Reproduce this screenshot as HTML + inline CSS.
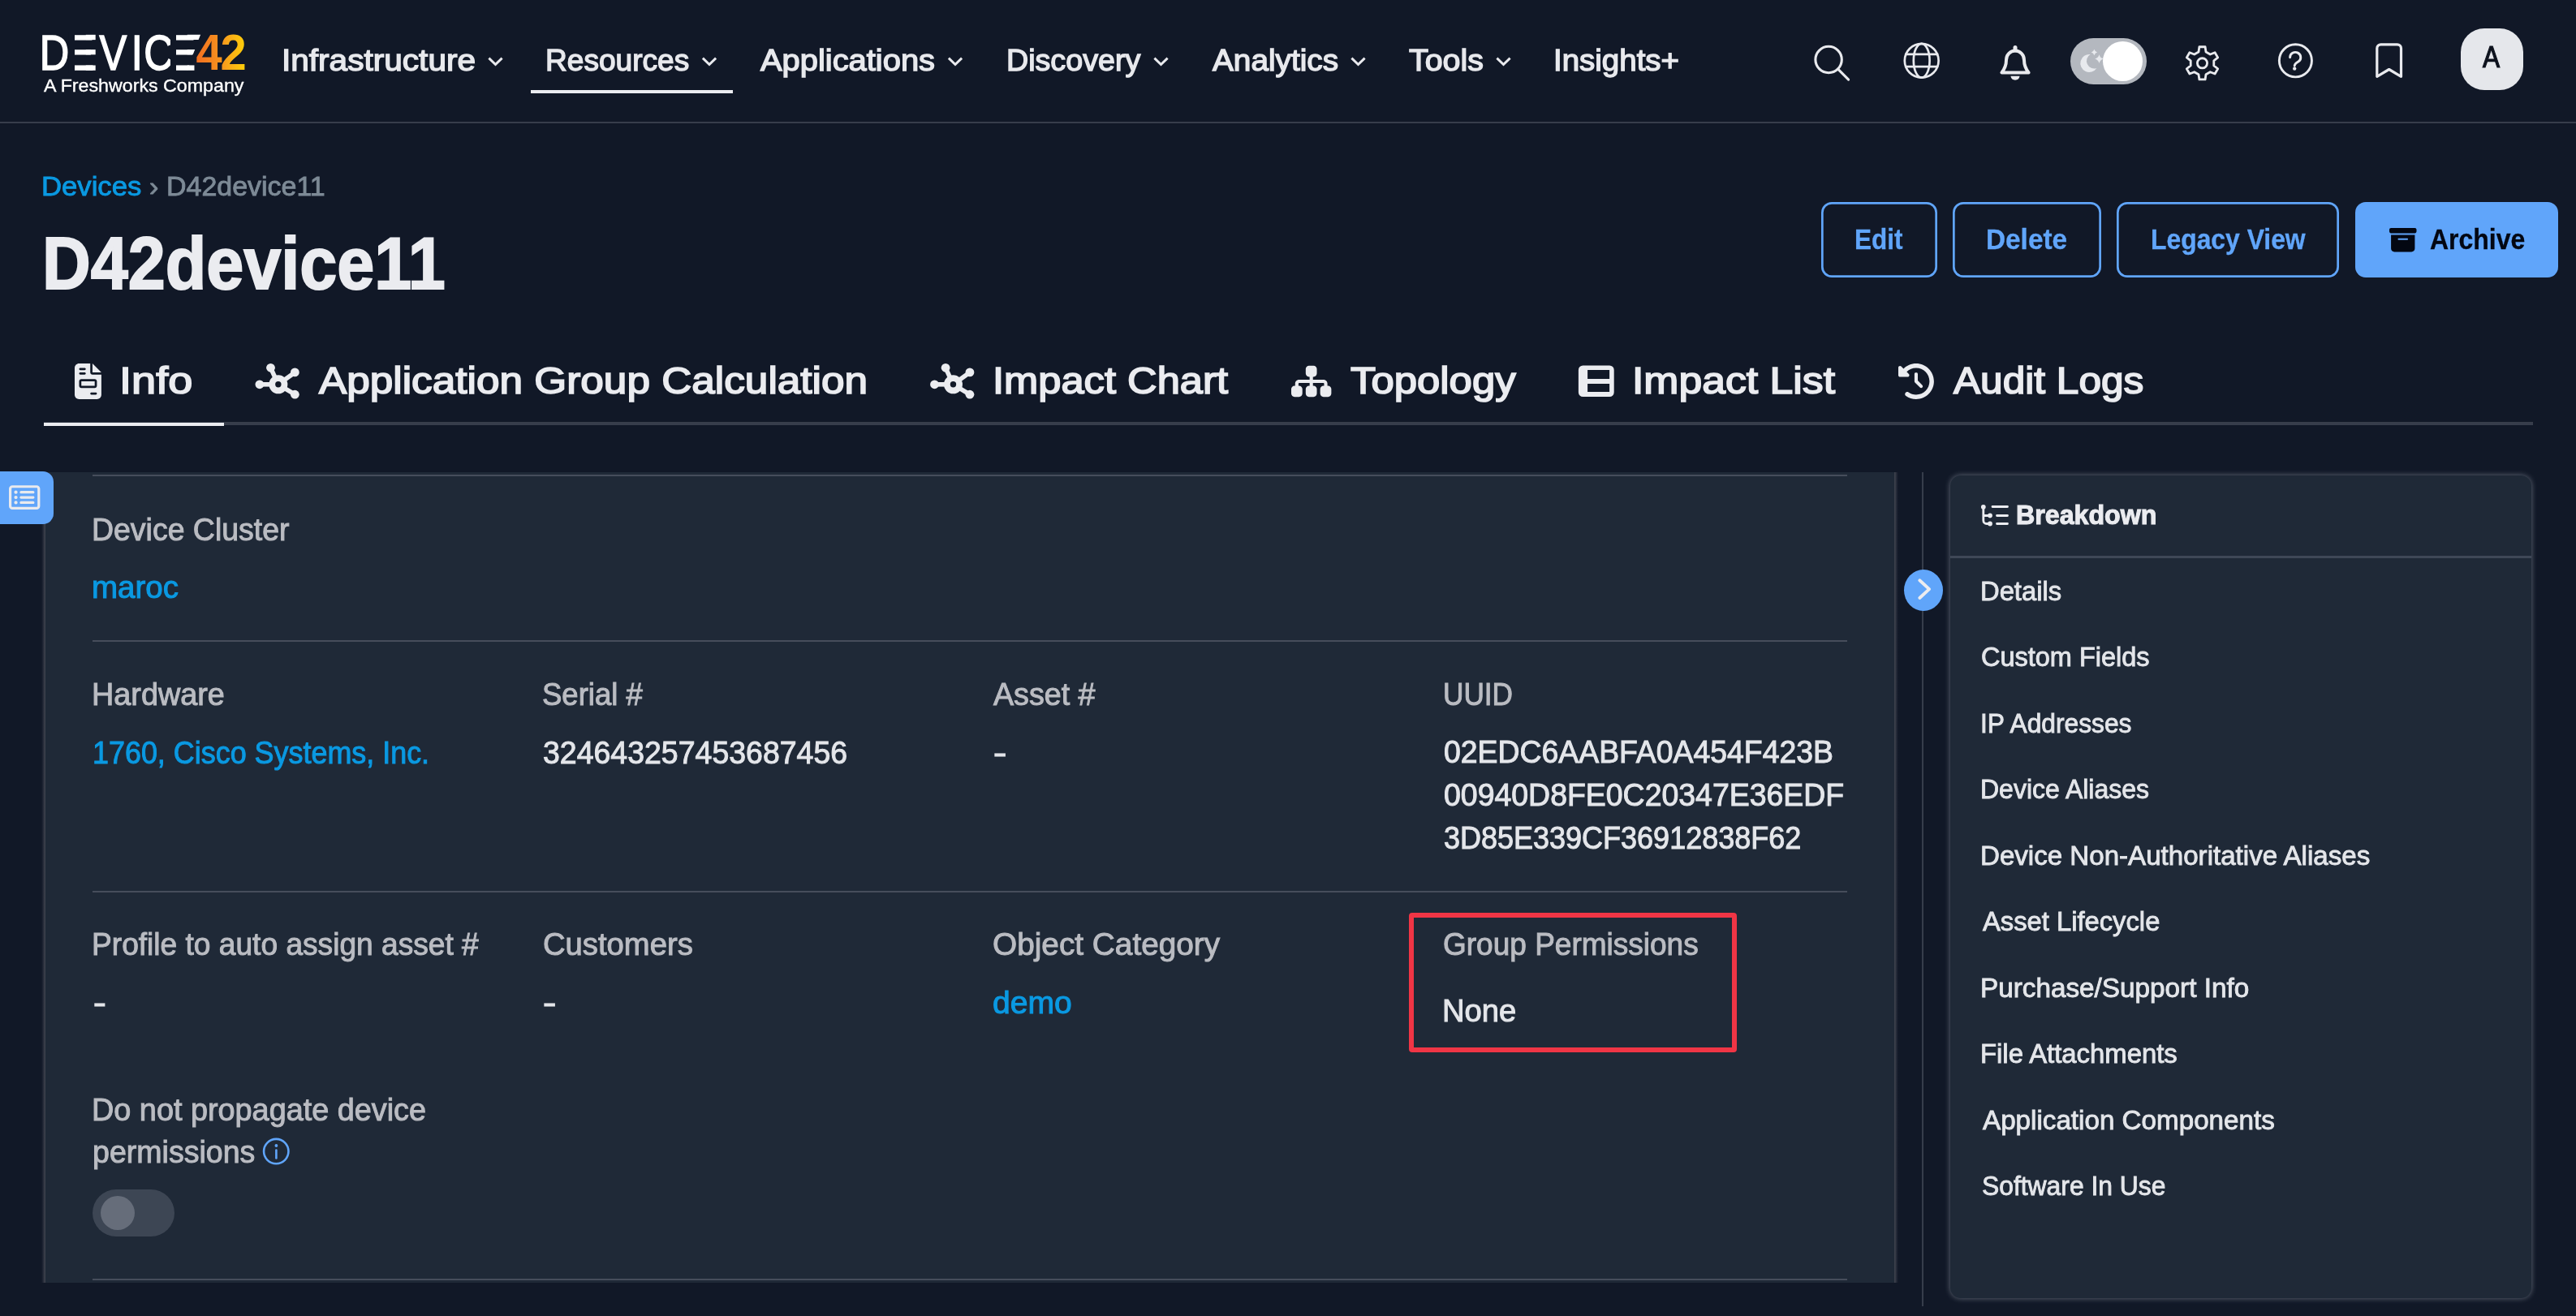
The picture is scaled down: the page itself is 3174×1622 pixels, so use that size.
<!DOCTYPE html>
<html lang="en">
<head>
<meta charset="utf-8">
<title>D42device11 | Device42</title>
<style>
*{box-sizing:border-box;margin:0;padding:0}
html,body{width:3174px;height:1622px;overflow:hidden;background:#111827}
body{position:relative;font-family:"Liberation Sans",sans-serif;color:#e8e9ed}
a{color:inherit;text-decoration:none}
button{font:inherit;color:inherit;background:none;border:0;display:block}
h1,h2{font-size:inherit;font-weight:inherit}
ul{list-style:none}
.layer{position:absolute;left:0;top:0;width:3174px;height:1622px;will-change:transform}
.a{position:absolute}
.t{position:absolute;white-space:nowrap;line-height:1;transform-origin:0 0;display:block}
svg{position:absolute;overflow:visible}
.nv{font-size:37.47px;color:#e8e9ed;font-weight:400;-webkit-text-stroke:1.4px #e8e9ed}
.tg{font-size:22.49px;color:#ffffff;font-weight:400;-webkit-text-stroke:0.35px #ffffff}
.av{font-size:36.66px;color:#0d121d;font-weight:400;-webkit-text-stroke:1.2px #0d121d}
.cl{font-size:33.3px;color:#0a99e2;font-weight:400;-webkit-text-stroke:0.9px #0a99e2}
.cr{font-size:33.3px;color:#7d8a96;font-weight:400;-webkit-text-stroke:0.9px #7d8a96}
.h1{font-size:91.0px;color:#ebecf0;font-weight:700;-webkit-text-stroke:2.0px #ebecf0}
.bt{font-size:34.16px;color:#60a5fa;font-weight:700;-webkit-text-stroke:0.3px #60a5fa}
.bd{font-size:34.16px;color:#030712;font-weight:700;-webkit-text-stroke:0.3px #030712}
.tb{font-size:46.94px;color:#ebecf0;font-weight:400;-webkit-text-stroke:1.7px #ebecf0}
.lb{font-size:38.05px;color:#babcc2;font-weight:400;-webkit-text-stroke:1.0px #babcc2}
.lk{font-size:38.05px;color:#0a99e2;font-weight:400;-webkit-text-stroke:1.0px #0a99e2}
.vl{font-size:38.05px;color:#e4e6ea;font-weight:400;-webkit-text-stroke:1.0px #e4e6ea}
.ds{font-size:37.76px;color:#e4e6ea;font-weight:400;-webkit-text-stroke:1.2px #e4e6ea}
.bh{font-size:33.91px;color:#ebecf0;font-weight:700;-webkit-text-stroke:1.1px #ebecf0}
.bi{font-size:33.3px;color:#e4e6ea;font-weight:400;-webkit-text-stroke:0.9px #e4e6ea}
.navline{left:0;top:149.8px;width:3174px;height:2.5px;background:#373d4b}
.resline{left:654px;top:111px;width:249px;height:4px;background:#ebecf0}
.pill{left:2551px;top:47px;width:94px;height:57px;border-radius:28.5px;background:#b4b8bf}
.pknob{left:2591px;top:50.5px;width:49px;height:49px;border-radius:50%;background:#fff}
.avatar{left:3032px;top:35px;width:77px;height:76px;border-radius:29px;background:#e5e7eb}
.btn{top:248.8px;height:93.2px;box-shadow:inset 0 0 0 2.7px #60a5fa;border-radius:13px}
.btn.fill{background:#60a5fa;box-shadow:none}
.tabline{left:54px;top:520px;width:3067px;height:4.1px;background:#373d4b}
.tabact{left:53.8px;top:520.7px;width:222.4px;height:4.4px;background:#ecedf1}
.card{left:56.3px;top:581.7px;width:2277.7px;height:999.3px;background:#1f2937}
.cardl{left:51.1px;top:581.7px;width:5.2px;height:999.3px;background:linear-gradient(to left,#3c404c 0,#3c404c 16%,#2b303d 45%,#1c2231 72%,#111827 100%)}
.cardr{left:2334px;top:581.7px;width:5.4px;height:999.3px;background:linear-gradient(to right,#3c404c 0,#3c404c 16%,#2b303d 45%,#1c2231 72%,#111827 100%)}
.sep{left:114px;width:2162px;height:2.3px;background:#464d5b}
.sidetab{left:0;top:581px;width:66px;height:65px;background:#60a5fa;border-radius:0 13px 13px 0}
.red{left:1735.5px;top:1125px;width:404px;height:172px;border:6px solid #f03545;border-radius:4px}
.tog{left:114px;top:1466px;width:101px;height:58px;border-radius:29px;background:#3d4654}
.knob{left:124px;top:1474px;width:42px;height:42px;border-radius:50%;background:#666d7a}
.vdiv{left:2368px;top:582px;width:2.1px;height:1028px;background:#363d4b}
.circ{left:2345.8px;top:701.7px;width:48.4px;height:51.6px;border-radius:50%;background:#60a5fa}
.panel{left:2403.3px;top:586.3px;width:715.4px;height:1013.7px;background:#1f2937;border-radius:13px;box-shadow:0 0 7px 0 rgba(205,210,222,.45)}
.psep{left:2403.3px;top:685.4px;width:715.4px;height:2.2px;background:#3f4857}
</style>
</head>
<body>
<header class="layer">
<a class="brand" href="#" aria-label="Device42"><svg style="left:0;top:0" width="340" height="130"><defs><linearGradient id="og" gradientUnits="userSpaceOnUse" x1="260.2" y1="0" x2="325.8" y2="0"><stop offset="0" stop-color="#f26f21"/><stop offset="0.5" stop-color="#f7931e"/><stop offset="0.62" stop-color="#f9a51a"/><stop offset="1" stop-color="#ffd008"/></linearGradient></defs><text transform="scale(0.82,1)" x="59.58 100.30 149.49 197.12 216.26 252.74" y="86.0" font-family="Liberation Sans, sans-serif" font-size="61.6" fill="#fff" stroke="#fff" stroke-width="1.6">DEVICE</text><rect x="84.99" y="40" width="7.01" height="50" fill="#111827"/><rect x="209.99" y="40" width="7.01" height="50" fill="#111827"/><rect x="105.77" y="42.82" width="11.93" height="6.29" fill="#fff"/><rect x="105.77" y="61.11" width="11.93" height="6.23" fill="#fff"/><rect x="105.77" y="80.51" width="11.93" height="6.29" fill="#fff"/><path d="M230.77,42.82 H247.10 L244.58,49.11 H230.77 Z" fill="#fff"/><path d="M230.77,61.11 H240.20 L237.71,67.34 H230.77 Z" fill="#fff"/><path d="M230.77,80.51 H233.40 L230.88,86.80 H230.77 Z" fill="#fff"/><text transform="scale(0.93,1)" x="259.78" y="86.0" font-family="Liberation Sans, sans-serif" font-weight="700" font-size="62.2" fill="url(#og)" letter-spacing="-2.5">42</text></svg><span class="t tg" style="left:54.14px;top:95.48px;transform:scaleX(1.0326)">A Freshworks Company</span></a>
<nav aria-label="Main"><a class="t nv" href="#" style="left:346.51px;top:55.57px;transform:scaleX(1.0829)">Infrastructure</a><a class="t nv" href="#" style="left:672.15px;top:55.57px;transform:scaleX(0.9897)">Resources</a><a class="t nv" href="#" style="left:936.67px;top:55.57px;transform:scaleX(1.0643)">Applications</a><a class="t nv" href="#" style="left:1239.62px;top:55.57px;transform:scaleX(1.0047)">Discovery</a><a class="t nv" href="#" style="left:1493.65px;top:55.57px;transform:scaleX(1.0340)">Analytics</a><a class="t nv" href="#" style="left:1735.85px;top:55.57px;transform:scaleX(1.0499)">Tools</a><a class="t nv" href="#" style="left:1914.17px;top:55.57px;transform:scaleX(1.0265)">Insights+</a><div class="a resline"></div></nav>
<div class="tools"><svg style="left:0;top:0" width="3174" height="150"><path d="M602.4,71.7 L610.5,79.5 L618.6,71.7" fill="none" stroke="#e9eaee" stroke-width="3" stroke-linecap="butt" stroke-linejoin="miter"/><path d="M865.9,71.7 L874.0,79.5 L882.1,71.7" fill="none" stroke="#e9eaee" stroke-width="3" stroke-linecap="butt" stroke-linejoin="miter"/><path d="M1168.9,71.7 L1177.0,79.5 L1185.1,71.7" fill="none" stroke="#e9eaee" stroke-width="3" stroke-linecap="butt" stroke-linejoin="miter"/><path d="M1422.4,71.7 L1430.5,79.5 L1438.6,71.7" fill="none" stroke="#e9eaee" stroke-width="3" stroke-linecap="butt" stroke-linejoin="miter"/><path d="M1665.4,71.7 L1673.5,79.5 L1681.6,71.7" fill="none" stroke="#e9eaee" stroke-width="3" stroke-linecap="butt" stroke-linejoin="miter"/><path d="M1844.4,71.7 L1852.5,79.5 L1860.6,71.7" fill="none" stroke="#e9eaee" stroke-width="3" stroke-linecap="butt" stroke-linejoin="miter"/><circle cx="2253.1" cy="73.5" r="16.2" fill="none" stroke="#e9eaee" stroke-linecap="round" stroke-linejoin="round" stroke-width="3.1"/><path d="M2264.9,85.4 L2277.6,98.2" fill="none" stroke="#e9eaee" stroke-linecap="round" stroke-linejoin="round" stroke-width="3.1"/><g fill="none" stroke="#e9eaee" stroke-linecap="round" stroke-linejoin="round" stroke-width="2.7"><circle cx="2367.7" cy="74.7" r="20.9"/><ellipse cx="2367.7" cy="74.7" rx="9.9" ry="20.9"/><path d="M2348.3,66.9 H2387.1 M2348.3,82.2 H2387.1"/></g><g transform="translate(2463,55)"><path d="M3.4,34.4 H36.6 C32.2,29 31,24.5 31,19 A11,11.4 0 0 0 9,19 C9,24.500 7.800,29 3.400,34.400 Z" fill="none" stroke="#e9eaee" stroke-linecap="round" stroke-linejoin="round" stroke-width="4"/><path d="M20,3.400 V7" fill="none" stroke="#e9eaee" stroke-linecap="round" stroke-linejoin="round" stroke-width="5"/><path d="M14.400,38.800 H25.600 A5.700,6 0 0 1 14.400,38.800 Z" fill="#e9eaee"/></g><path d="M2708.99,63.96 L2709.89,57.77 L2717.11,57.77 L2718.01,63.96 L2723.27,67.00 L2729.08,64.68 L2732.69,70.94 L2727.78,74.81 L2727.78,80.89 L2732.69,84.76 L2729.08,91.02 L2723.27,88.70 L2718.01,91.74 L2717.11,97.93 L2709.89,97.93 L2708.99,91.74 L2703.73,88.70 L2697.92,91.02 L2694.31,84.76 L2699.22,80.89 L2699.22,74.81 L2694.31,70.94 L2697.92,64.68 L2703.73,67.00 Z" fill="none" stroke="#e9eaee" stroke-linecap="round" stroke-linejoin="round" stroke-width="2.8"/><circle cx="2713.5" cy="77.85" r="6.1" fill="none" stroke="#e9eaee" stroke-linecap="round" stroke-linejoin="round" stroke-width="2.8"/><circle cx="2828.4" cy="74.8" r="20.05" fill="none" stroke="#e9eaee" stroke-linecap="round" stroke-linejoin="round" stroke-width="2.9"/><path d="M2821.6,70.800 A6.600,6.300 0 1 1 2831.800,76 C2829,77.800 2827.200,78.800 2827.200,81.300" fill="none" stroke="#e9eaee" stroke-linecap="round" stroke-linejoin="round" stroke-width="2.9"/><circle cx="2827.2" cy="84.6" r="2.2" fill="#e9eaee"/><path d="M2928.8,94.3 V59.500 a4.700,4.700 0 0 1 4.700,-4.700 H2953.800 a4.700,4.700 0 0 1 4.700,4.700 V94.300 L2943.650,85.500 Z" fill="none" stroke="#e9eaee" stroke-linecap="round" stroke-linejoin="round" stroke-width="3.200" stroke-linejoin="miter"/></svg><div class="a pill" role="switch" aria-label="Theme"></div><svg style="left:0;top:0" width="3174" height="150"><path d="M2575.60,66.98 A11.0,11.0 0 1 0 2583.46,83.99 A9.42,9.42 0 0 1 2575.60,66.98 Z" fill="#e8eaee"/><path d="M2580.4,60.8 Q2581.214,63.686 2584.1,64.5 Q2581.214,65.314 2580.4,68.2 Q2579.5860000000002,65.314 2576.7000000000003,64.5 Q2579.5860000000002,63.686 2580.4,60.8 Z M2586.5,67.3 Q2587.666,71.434 2591.8,72.6 Q2587.666,73.76599999999999 2586.5,77.89999999999999 Q2585.334,73.76599999999999 2581.2,72.6 Q2585.334,71.434 2586.5,67.3 Z" fill="#e8eaee"/></svg><div class="a pknob"></div>
<div class="a avatar"><span class="t av" style="left:27.46px;top:18.36px;transform:scaleX(0.8625)">A</span></div></div>
<div class="a navline"></div>
</header>
<main class="layer">
<nav aria-label="Breadcrumb"><a class="t cl" href="#" style="left:50.93px;top:213.05px;transform:scaleX(1.0408)">Devices</a><span class="t cr" style="left:184.28px;top:213.05px;transform:scaleX(1.0208)">›</span><span class="t cr" style="left:204.77px;top:213.05px;transform:scaleX(1.0200)">D42device11</span></nav>
<h1 class="t h1" style="left:52.07px;top:279.25px;transform:scaleX(0.9092)">D42device11</h1>
<div class="actions">
<button type="button" class="a btn" style="left:2244px;width:143px"><span class="t bt" style="left:41.03px;top:29.13px;transform:scaleX(0.9218)">Edit</span></button>
<button type="button" class="a btn" style="left:2406px;width:183px"><span class="t bt" style="left:41.42px;top:29.13px;transform:scaleX(0.9762)">Delete</span></button>
<button type="button" class="a btn" style="left:2608px;width:274px"><span class="t bt" style="left:41.76px;top:29.13px;transform:scaleX(0.9326)">Legacy View</span></button>
<button type="button" class="a btn fill" style="left:2902px;width:250px"><span class="t bd" style="left:91.74px;top:28.73px;transform:scaleX(0.9354)">Archive</span></button>
</div>
<div class="tabs" role="tablist"><div class="a tabline"></div><div class="a tabact"></div><svg style="left:92.1px;top:447.9px" width="32.92" height="43.90" viewBox="0 0 384 512"><path fill="#ebecf0" d="M64 0C28.7 0 0 28.7 0 64V448c0 35.300 28.700 64 64 64H320c35.300 0 64-28.700 64-64V160H256c-17.700 0-32-14.300-32-32V0H64zM256 0V128H384L256 0zM80 64h64c8.800 0 16 7.200 16 16s-7.200 16-16 16H80c-8.800 0-16-7.200-16-16s7.200-16 16-16zm0 64h64c8.800 0 16 7.200 16 16s-7.200 16-16 16H80c-8.800 0-16-7.200-16-16s7.200-16 16-16zm16 96H288c17.700 0 32 14.300 32 32v64c0 17.700-14.300 32-32 32H96c-17.700 0-32-14.300-32-32V256c0-17.700 14.300-32 32-32zm0 32v64H288V256H96zM240 416h64c8.800 0 16 7.200 16 16s-7.200 16-16 16H240c-8.800 0-16-7.200-16-16s7.200-16 16-16z"/></svg><svg style="left:0;top:0" width="3174" height="560"><g stroke="#ebecf0" stroke-width="5.6" fill="#ebecf0"><path d="M342.86,473.8 L319.90,473.8"/><path d="M342.86,473.8 L333.50,453.3"/><path d="M342.86,473.8 L363.35,458.9"/><path d="M342.86,473.8 L363.35,486.2"/></g><circle cx="319.90" cy="473.8" r="5.400" fill="#ebecf0"/><circle cx="333.50" cy="453.3" r="5.400" fill="#ebecf0"/><circle cx="363.35" cy="458.9" r="5.400" fill="#ebecf0"/><circle cx="363.35" cy="486.2" r="5.400" fill="#ebecf0"/><circle cx="342.86" cy="473.8" r="11.500" fill="#ebecf0"/><circle cx="342.86" cy="473.8" r="3.700" fill="#111827"/><g stroke="#ebecf0" stroke-width="5.6" fill="#ebecf0"><path d="M1174.46,473.8 L1151.50,473.8"/><path d="M1174.46,473.8 L1165.10,453.3"/><path d="M1174.46,473.8 L1194.95,458.9"/><path d="M1174.46,473.8 L1194.95,486.2"/></g><circle cx="1151.50" cy="473.8" r="5.400" fill="#ebecf0"/><circle cx="1165.10" cy="453.3" r="5.400" fill="#ebecf0"/><circle cx="1194.95" cy="458.9" r="5.400" fill="#ebecf0"/><circle cx="1194.95" cy="486.2" r="5.400" fill="#ebecf0"/><circle cx="1174.46" cy="473.8" r="11.500" fill="#ebecf0"/><circle cx="1174.46" cy="473.8" r="3.700" fill="#111827"/><path fill-rule="evenodd" fill="#ebecf0" d="M1950.400,450.500 H1983.200 a5.500,5.500 0 0 1 5.500,5.500 V483.500 a5.500,5.500 0 0 1 -5.500,5.500 H1950.400 a5.500,5.500 0 0 1 -5.500,-5.500 V456 a5.500,5.500 0 0 1 5.500,-5.500 Z M1956.100,456.100 V467 H1983.100 V456.100 Z M1956.100,472.900 V483.100 H1983.100 V472.900 Z"/></svg><svg style="left:1590.9px;top:447.95px" width="49.39" height="43.90" viewBox="0 0 576 512"><path fill="#ebecf0" d="M208 80c0-26.500 21.500-48 48-48h64c26.500 0 48 21.500 48 48v64c0 26.500-21.500 48-48 48h-8v40H464c30.900 0 56 25.100 56 56v32h8c26.500 0 48 21.500 48 48v64c0 26.500-21.500 48-48 48H464c-26.500 0-48-21.500-48-48V368c0-26.500 21.500-48 48-48h8V288c0-4.400-3.600-8-8-8H312v40h8c26.500 0 48 21.500 48 48v64c0 26.500-21.500 48-48 48H256c-26.500 0-48-21.500-48-48V368c0-26.500 21.500-48 48-48h8V280H112c-4.400 0-8 3.600-8 8v32h8c26.500 0 48 21.500 48 48v64c0 26.500-21.500 48-48 48H48c-26.500 0-48-21.500-48-48V368c0-26.500 21.500-48 48-48h8V288c0-30.900 25.100-56 56-56H264V192h-8c-26.500 0-48-21.500-48-48V80z"/></svg><svg style="left:2338.75px;top:447.7px" width="43.90" height="43.90" viewBox="0 0 512 512"><path fill="#ebecf0" d="M75 75L41 41C25.900 25.900 0 36.600 0 57.900V168c0 13.300 10.700 24 24 24H134.100c21.400 0 32.100-25.900 17-41l-30.800-30.800C155 85.500 203 64 256 64c106 0 192 86 192 192s-86 192-192 192c-40.800 0-78.600-12.700-109.700-34.400c-14.500-10.100-34.400-6.600-44.600 7.900s-6.600 34.400 7.900 44.600C151.200 495 201.700 512 256 512c141.400 0 256-114.600 256-256S397.400 0 256 0C185.300 0 121.300 28.700 75 75zm181 53c-13.300 0-24 10.700-24 24V256c0 6.400 2.500 12.500 7 17l72 72c9.400 9.400 24.600 9.400 33.900 0s9.400-24.600 0-33.900l-65-65V152c0-13.300-10.700-24-24-24z"/></svg><a class="t tb" href="#" role="tab" style="left:147.23px;top:445.66px;transform:scaleX(1.1535)">Info</a><a class="t tb" href="#" role="tab" style="left:393.33px;top:445.66px;transform:scaleX(1.0933)">Application Group Calculation</a><a class="t tb" href="#" role="tab" style="left:1223.24px;top:445.66px;transform:scaleX(1.0792)">Impact Chart</a><a class="t tb" href="#" role="tab" style="left:1663.53px;top:445.66px;transform:scaleX(1.0839)">Topology</a><a class="t tb" href="#" role="tab" style="left:2011.16px;top:445.66px;transform:scaleX(1.1017)">Impact List</a><a class="t tb" href="#" role="tab" style="left:2407.05px;top:445.66px;transform:scaleX(1.0565)">Audit Logs</a></div>
<section class="details" aria-label="Details">
<div class="a card"></div><div class="a cardl"></div><div class="a cardr"></div>
<div class="a sep" style="top:584.9px"></div>
<div class="a sep" style="top:789px"></div>
<div class="a sep" style="top:1098px"></div>
<div class="a sep" style="top:1576px"></div>
<div class="a red"></div>
<dl>
<div><dt><span class="t lb" style="left:112.92px;top:633.53px;transform:scaleX(0.9842)">Device Cluster</span></dt><dd><a class="t lk" href="#" style="left:113.45px;top:704.78px;transform:scaleX(1.0128)">maroc</a></dd></div>
<div><dt><span class="t lb" style="left:112.90px;top:836.53px;transform:scaleX(0.9931)">Hardware</span></dt><dd><a class="t lk" href="#" style="left:113.99px;top:908.53px;transform:scaleX(0.9437)">1760, Cisco Systems, Inc.</a></dd></div>
<div><dt><span class="t lb" style="left:668.32px;top:836.53px;transform:scaleX(0.9603)">Serial #</span></dt><dd><span class="t vl" style="left:668.57px;top:908.53px;transform:scaleX(0.9848)">324643257453687456</span></dd></div>
<div><dt><span class="t lb" style="left:1224.17px;top:836.53px;transform:scaleX(0.9892)">Asset #</span></dt><dd><span class="t ds" style="left:1224.35px;top:908.68px;transform:scaleX(1.2962)">-</span></dd></div>
<div><dt><span class="t lb" style="left:1777.75px;top:836.53px;transform:scaleX(0.9244)">UUID</span></dt><dd><span class="t vl" style="left:1779.03px;top:907.78px;transform:scaleX(0.9824)">02EDC6AABFA0A454F423B</span><span class="t vl" style="left:1779.03px;top:961.03px;transform:scaleX(0.9839)">00940D8FE0C20347E36EDF</span><span class="t vl" style="left:1779.10px;top:1013.53px;transform:scaleX(0.9460)">3D85E339CF36912838F62</span></dd></div>
<div><dt><span class="t lb" style="left:112.94px;top:1145.28px;transform:scaleX(0.9758)">Profile to auto assign asset #</span></dt><dd><span class="t ds" style="left:114.90px;top:1217.43px;transform:scaleX(1.2481)">-</span></dd></div>
<div><dt><span class="t lb" style="left:668.56px;top:1145.28px;transform:scaleX(1.0048)">Customers</span></dt><dd><span class="t ds" style="left:669.35px;top:1217.43px;transform:scaleX(1.2962)">-</span></dd></div>
<div><dt><span class="t lb" style="left:1223.17px;top:1145.28px;transform:scaleX(1.0190)">Object Category</span></dt><dd><a class="t lk" href="#" style="left:1223.37px;top:1216.78px;transform:scaleX(1.0271)">demo</a></dd></div>
<div><dt><span class="t lb" style="left:1778.12px;top:1145.28px;transform:scaleX(0.9728)">Group Permissions</span></dt><dd><span class="t vl" style="left:1777.37px;top:1226.53px;transform:scaleX(1.0041)">None</span></dd></div>
<div><dt><span class="t lb" style="left:112.89px;top:1348.53px;transform:scaleX(0.9939)">Do not propagate device</span><span class="t lb" style="left:113.57px;top:1401.03px;transform:scaleX(0.9868)">permissions</span></dt><dd></dd></div>
</dl>
<div class="a tog" role="switch" aria-checked="false"></div><div class="a knob"></div>
<div class="a sidetab"></div>
</section>
<div class="splitter"><div class="a vdiv"></div><div class="a circ"></div></div>
<aside class="breakdown" aria-label="Breakdown"><div class="a panel"></div><div class="a psep"></div><h2 class="t bh" style="left:2484.37px;top:617.74px;transform:scaleX(0.9488)">Breakdown</h2>
<ul><li><a class="t bi" href="#" style="left:2440.36px;top:711.75px;transform:scaleX(0.9834)">Details</a></li><li><a class="t bi" href="#" style="left:2441.39px;top:793.25px;transform:scaleX(0.9754)">Custom Fields</a></li><li><a class="t bi" href="#" style="left:2440.10px;top:874.75px;transform:scaleX(0.9535)">IP Addresses</a></li><li><a class="t bi" href="#" style="left:2440.41px;top:956.25px;transform:scaleX(0.9609)">Device Aliases</a></li><li><a class="t bi" href="#" style="left:2440.33px;top:1037.75px;transform:scaleX(0.9941)">Device Non-Authoritative Aliases</a></li><li><a class="t bi" href="#" style="left:2442.98px;top:1119.25px;transform:scaleX(0.9832)">Asset Lifecycle</a></li><li><a class="t bi" href="#" style="left:2440.32px;top:1200.75px;transform:scaleX(0.9997)">Purchase/Support Info</a></li><li><a class="t bi" href="#" style="left:2440.35px;top:1282.25px;transform:scaleX(0.9860)">File Attachments</a></li><li><a class="t bi" href="#" style="left:2442.98px;top:1363.75px;transform:scaleX(0.9968)">Application Components</a></li><li><a class="t bi" href="#" style="left:2441.58px;top:1445.25px;transform:scaleX(0.9557)">Software In Use</a></li></ul></aside>
<svg style="left:2943.8px;top:278.9px" width="33.50" height="33.50" viewBox="0 0 512 512"><path fill="#030712" d="M32 32H480c17.700 0 32 14.300 32 32V96c0 17.700-14.300 32-32 32H32C14.300 128 0 113.700 0 96V64C0 46.300 14.300 32 32 32zm0 128H480V416c0 35.300-28.700 64-64 64H96c-35.300 0-64-28.700-64-64V160zm128 80c0 8.800 7.200 16 16 16H336c8.800 0 16-7.200 16-16s-7.200-16-16-16H176c-8.800 0-16 7.200-16 16z"/></svg><svg style="left:10.6px;top:595.7px" width="38.42" height="34.15" viewBox="0 0 576 512"><path fill="#e9eaee" d="M64 80c-8.800 0-16 7.200-16 16V416c0 8.800 7.200 16 16 16H512c8.800 0 16-7.200 16-16V96c0-8.800-7.200-16-16-16H64zM0 96C0 60.700 28.700 32 64 32H512c35.300 0 64 28.700 64 64V416c0 35.300-28.700 64-64 64H64c-35.300 0-64-28.700-64-64V96zm96 64a32 32 0 1 1 64 0 32 32 0 1 1 -64 0zm104 0c0-13.300 10.700-24 24-24H448c13.300 0 24 10.700 24 24s-10.700 24-24 24H224c-13.300 0-24-10.700-24-24zm0 96c0-13.300 10.700-24 24-24H448c13.300 0 24 10.700 24 24s-10.700 24-24 24H224c-13.300 0-24-10.700-24-24zm0 96c0-13.300 10.700-24 24-24H448c13.300 0 24 10.700 24 24s-10.700 24-24 24H224c-13.300 0-24-10.700-24-24zm-72-64a32 32 0 1 1 0-64 32 32 0 1 1 0 64zM96 352a32 32 0 1 1 64 0 32 32 0 1 1 -64 0z"/></svg><svg style="left:0;top:560px" width="3174" height="1062" viewBox="0 560 3174 1062"><path d="M2365.300,715.200 L2377.100,726.100 L2365.300,737" fill="none" stroke="#ececef" stroke-width="3.900" stroke-linecap="round" stroke-linejoin="round"/><circle cx="340.25" cy="1419.1" r="15.200" fill="none" stroke="#60a5fa" stroke-width="2.600"/><path d="M340.400,1417.600 V1427.400" stroke="#60a5fa" stroke-width="2.600" stroke-linecap="round"/><circle cx="340.4" cy="1412" r="1.900" fill="#60a5fa"/><g fill="none" stroke="#ebecf0" stroke-width="2.800" stroke-linecap="round" stroke-linejoin="round"><path d="M2443.800,626 V641.500 a4,4 0 0 0 4,4 H2450.500 M2443.800,633.500 a2,2 0 0 0 2,2 H2450.500"/><path d="M2455,624.500 H2473.500 M2460.500,635.500 H2473.500 M2460.500,645.500 H2473.500"/></g><circle cx="2443.8" cy="624.8" r="2.900" fill="#ebecf0"/><circle cx="2452" cy="635.500" r="2.900" fill="#ebecf0"/><circle cx="2452" cy="645.500" r="2.900" fill="#ebecf0"/></svg>
</main>
</body>
</html>
